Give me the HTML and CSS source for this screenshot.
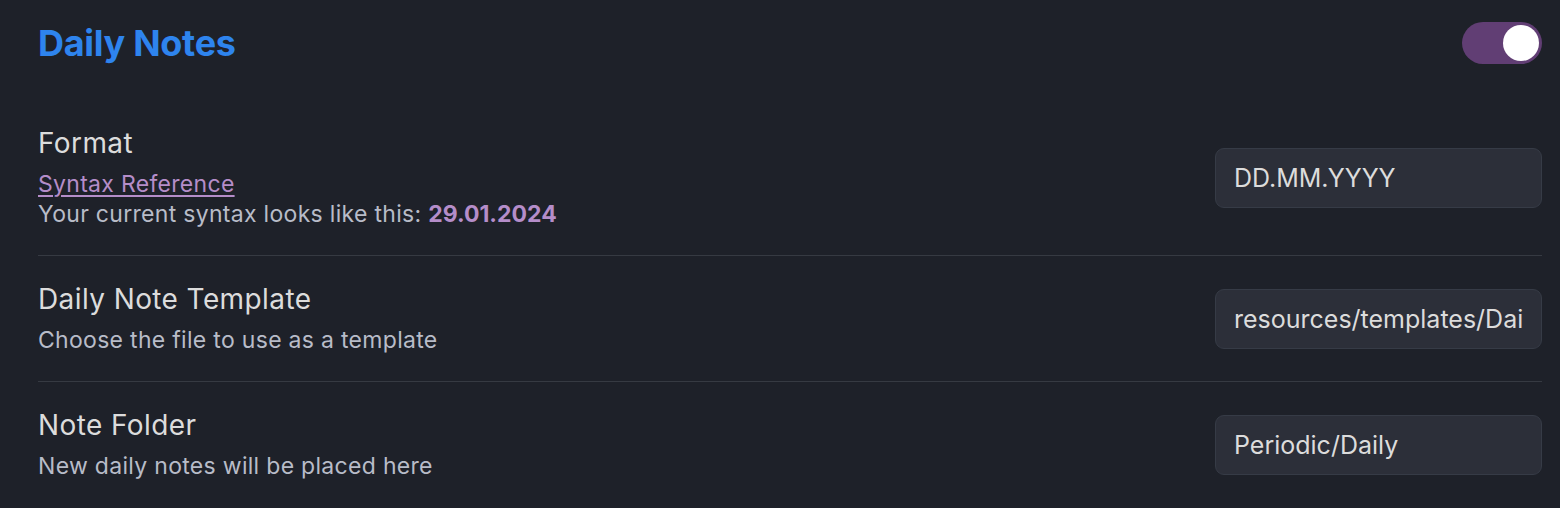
FILE: index.html
```html
<!DOCTYPE html>
<html lang="en">
<head>
<meta charset="utf-8">
<link rel="stylesheet" href="styles.css">
</head>
<body>
<div class="page">
  <div class="header">
    <h1 class="title">Daily Notes</h1>
    <div class="toggle"><div class="knob"></div></div>
  </div>
  <div class="setting">
    <div class="info">
      <div class="name">Format</div>
      <div class="desc">
        <a class="link" href="#">Syntax Reference</a><br>
        Your current syntax looks like this: <b class="date">29.01.2024</b>
      </div>
    </div>
    <div class="input"><span class="value">DD.MM.YYYY</span></div>
  </div>
  <div class="setting">
    <div class="info">
      <div class="name">Daily Note Template</div>
      <div class="desc">Choose the file to use as a template</div>
    </div>
    <div class="input"><span class="value">resources/templates/Daily</span></div>
  </div>
  <div class="setting">
    <div class="info">
      <div class="name">Note Folder</div>
      <div class="desc">New daily notes will be placed here</div>
    </div>
    <div class="input"><span class="value">Periodic/Daily</span></div>
  </div>
</div>
</body>
</html>
```
FILE: styles.css
```css
html, body {
  margin: 0;
  padding: 0;
  background: #1e2129;
  height: 100%;
  overflow: hidden;
}
.page {
  padding: 0 18px 0 38px;
  font-family: Inter, "Noto Sans", sans-serif;
}
.header {
  display: flex;
  justify-content: space-between;
  align-items: center;
  padding: 22px 0 36px;
}
.title {
  margin: 0;
  font-size: 36px;
  line-height: 42px;
  font-weight: 700;
  color: #2e84ee;
  letter-spacing: -0.3px;
}
.toggle {
  width: 80px;
  height: 42px;
  border-radius: 21px;
  background: #613e74;
  display: flex;
  justify-content: flex-end;
  align-items: center;
  padding: 0 3px;
  box-sizing: border-box;
}
.knob {
  width: 36px;
  height: 36px;
  border-radius: 50%;
  background: #ffffff;
}
.setting {
  display: flex;
  justify-content: space-between;
  align-items: center;
  padding: 26px 0;
}
.setting + .setting {
  border-top: 1px solid #363a42;
}
.name {
  font-size: 28px;
  line-height: 35px;
  letter-spacing: 0.4px;
  color: #dcdcdc;
}
.desc {
  padding-top: 8px;
  font-size: 23px;
  line-height: 30px;
  letter-spacing: 0.3px;
  color: #b8bcc8;
}
.link {
  color: #b58dc9;
  text-decoration: underline;
  text-decoration-thickness: 2px;
  text-underline-offset: 3px;
}
.date {
  color: #b58dc9;
  font-weight: 700;
  letter-spacing: 0;
}
.input {
  display: flex;
  width: 327px;
  height: 60px;
  box-sizing: border-box;
  border: 1px solid #363b46;
  border-radius: 9px;
  background: #2c2f39;
  color: #dcdcdc;
  font-size: 25px;
  line-height: 58px;
  padding: 0 18px;
}
.value {
  flex: 1;
  white-space: nowrap;
  overflow: hidden;
}
```
